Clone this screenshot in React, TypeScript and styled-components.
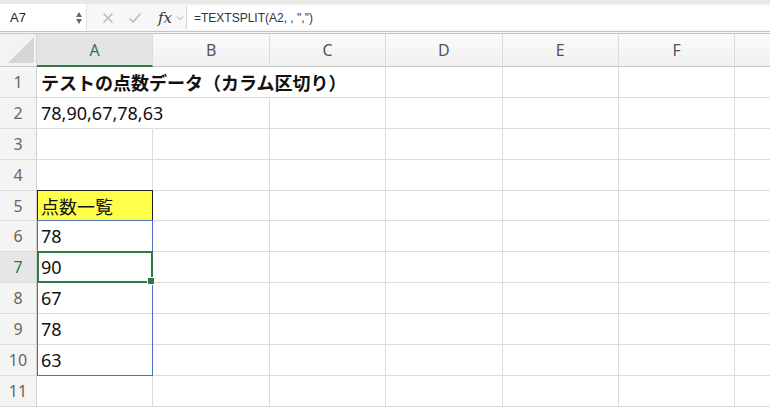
import React from "react";
import styled, { createGlobalStyle } from "styled-components";

const GlobalStyle = createGlobalStyle`
  html, body { margin: 0; padding: 0; background: #ffffff; }
  body {
    font-family: "Noto Sans", "Noto Sans CJK JP", sans-serif;
    overflow: hidden;
  }
`;

// G sits past the right edge of the window, only its left part shows
const COLS = ["A", "B", "C", "D", "E", "F", "G"];
const VISIBLE_LABELS = ["A", "B", "C", "D", "E", "F"];
const ROW_COUNT = 11;

type CellData = { text?: string; bold?: boolean; yellow?: boolean; spill?: boolean };

const data: Record<string, CellData> = {
  A1: { text: "テストの点数データ（カラム区切り）", bold: true, spill: true },
  B1: { spill: true },
  A2: { text: "78,90,67,78,63", spill: true },
  A5: { text: "点数一覧", yellow: true },
  A6: { text: "78" },
  A7: { text: "90" },
  A8: { text: "67" },
  A9: { text: "78" },
  A10: { text: "63" },
};

const Page = styled.div`
  width: 770px;
  height: 407px;
  overflow: hidden;
  display: flex;
  flex-direction: column;
`;

const Toolbar = styled.div`
  height: 27px;
  display: flex;
  align-items: stretch;
  background: #f7f7f7;
  border-top: 4px solid #e9e9e9;
  border-bottom: 3px double #c4c4c4;
`;

const NameBox = styled.div`
  width: 87px;
  display: flex;
  align-items: center;
  justify-content: space-between;
  padding: 0 4px 0 10px;
  box-sizing: border-box;
  background: #ffffff;
  border-right: 1px solid #e2e2e2;
  font-family: "Liberation Sans", Arial, sans-serif;
  font-size: 13px;
  color: #222;
`;

const Spinner = styled.div`
  display: flex;
  flex-direction: column;
  gap: 2px;
`;

const Arrow = styled.div<{ $up?: boolean }>`
  width: 0;
  height: 0;
  border-left: 3.5px solid transparent;
  border-right: 3.5px solid transparent;
  ${(p) =>
    p.$up
      ? "border-bottom: 5px solid #6a6a6a;"
      : "border-top: 5px solid #6a6a6a;"}
`;

const Actions = styled.div`
  width: 99px;
  display: flex;
  align-items: center;
  padding-left: 15px;
  box-sizing: border-box;
  gap: 14px;
`;

const FxLabel = styled.span`
  font-family: "DejaVu Serif", "Liberation Serif", serif;
  font-style: italic;
  font-size: 15px;
  color: #333;
  margin-left: 2px;
`;

const FormulaBox = styled.div`
  flex: 1;
  display: flex;
  align-items: center;
  background: #ffffff;
  border-left: 1px solid #d6d6d6;
  margin: 2px 0;
  padding-left: 7px;
  font-family: "Liberation Sans", Arial, sans-serif;
  font-size: 12px;
  color: #333;
`;

const Sheet = styled.div`
  display: grid;
  grid-template-columns: 37px repeat(7, 116.4px);
  grid-template-rows: 33px repeat(${ROW_COUNT}, 30.9px);
`;

const Corner = styled.div`
  grid-column: 1;
  grid-row: 1;
  background: #f3f3f3;
  border-right: 1px solid #d4d4d4;
  border-bottom: 1px solid #c8c8c8;
  display: flex;
  align-items: flex-end;
  justify-content: flex-end;
  padding: 0 2px 3px 0;
`;

const ColHeader = styled.div<{ $col: number; $active?: boolean }>`
  grid-row: 1;
  grid-column: ${(p) => p.$col};
  background: ${(p) => (p.$active ? "#e4e4e4" : "linear-gradient(#fbfbfb, #f1f1f1)")};
  border-right: 1px solid #dcdcdc;
  border-bottom: ${(p) => (p.$active ? "2px solid #2c7a46" : "1px solid #c8c8c8")};
  display: flex;
  align-items: center;
  justify-content: center;
  font-size: 16px;
  color: ${(p) => (p.$active ? "#2c7a46" : "#555")};
`;

const RowHeader = styled.div<{ $row: number; $active?: boolean }>`
  grid-column: 1;
  grid-row: ${(p) => p.$row};
  background: ${(p) => (p.$active ? "#e6e6e6" : "#f4f4f4")};
  border-right: 1px solid #d0d0d0;
  border-bottom: 1px solid #dcdcdc;
  display: flex;
  align-items: center;
  justify-content: center;
  font-size: 16px;
  color: ${(p) => (p.$active ? "#2c7a46" : "#666")};
`;

const Cell = styled.div<{
  $row: number;
  $col: number;
  $bold?: boolean;
  $yellow?: boolean;
  $spill?: boolean;
}>`
  grid-row: ${(p) => p.$row};
  grid-column: ${(p) => p.$col};
  border-right: 1px solid ${(p) => (p.$spill ? "transparent" : "#dcdcdc")};
  border-bottom: 1px solid #dcdcdc;
  background: ${(p) => (p.$yellow ? "#ffff4a" : "transparent")};
  display: flex;
  align-items: center;
  padding-left: 4px;
  white-space: nowrap;
  overflow: visible;
  font-family: "Noto Sans", "Noto Sans CJK JP", sans-serif;
  font-size: 18px;
  font-weight: ${(p) => (p.$bold ? 700 : 400)};
  color: #111;
  min-width: 0;
`;

const RangeBox = styled.div<{ $from: number; $to: number; $color: string; $width: number }>`
  grid-column: 2;
  grid-row: ${(p) => `${p.$from} / ${p.$to}`};
  pointer-events: none;
  border: ${(p) => `${p.$width}px solid ${p.$color}`};
  margin: -1px 0 0 0;
  position: relative;
  z-index: 2;
`;

const FillHandle = styled.div`
  position: absolute;
  right: -4px;
  bottom: -4px;
  width: 6px;
  height: 6px;
  background: #2c7a46;
  border: 1px solid #ffffff;
`;

const CrossIcon = () => (
  <svg width="12" height="12" viewBox="0 0 12 12">
    <path d="M1.5 1.5 L10.5 10.5 M10.5 1.5 L1.5 10.5" stroke="#bdbdbd" strokeWidth="1.6" />
  </svg>
);

const CheckIcon = () => (
  <svg width="14" height="12" viewBox="0 0 14 12">
    <path d="M1.5 6.5 L5 10 L12.5 1.5" stroke="#bdbdbd" strokeWidth="1.6" fill="none" />
  </svg>
);

const ChevronIcon = () => (
  <svg width="8" height="6" viewBox="0 0 8 6" style={{ marginLeft: -10 }}>
    <path d="M1 1.5 L4 4.5 L7 1.5" stroke="#aaaaaa" strokeWidth="1" fill="none" />
  </svg>
);

const CornerTriangle = () => (
  <svg width="26" height="26" viewBox="0 0 26 26">
    <path d="M26 0 L26 26 L0 26 Z" fill="#d6d6d6" />
  </svg>
);

export default function App() {
  const rows = Array.from({ length: ROW_COUNT }, (_, i) => i + 1);
  return (
    <Page>
      <GlobalStyle />
      <Toolbar>
        <NameBox>
          A7
          <Spinner>
            <Arrow $up />
            <Arrow />
          </Spinner>
        </NameBox>
        <Actions>
          <CrossIcon />
          <CheckIcon />
          <FxLabel>fx</FxLabel>
          <ChevronIcon />
        </Actions>
        <FormulaBox>=TEXTSPLIT(A2, , ",")</FormulaBox>
      </Toolbar>
      <Sheet>
        <Corner>
          <CornerTriangle />
        </Corner>
        {COLS.map((c, ci) => (
          <ColHeader key={c} $col={ci + 2} $active={c === "A"}>
            {VISIBLE_LABELS.includes(c) ? c : null}
          </ColHeader>
        ))}
        {rows.map((r) => (
          <React.Fragment key={r}>
            <RowHeader $row={r + 1} $active={r === 7}>
              {r}
            </RowHeader>
            {COLS.map((c, ci) => {
              const d = data[`${c}${r}`];
              return (
                <Cell
                  key={c}
                  $row={r + 1}
                  $col={ci + 2}
                  $bold={d?.bold}
                  $yellow={d?.yellow}
                  $spill={d?.spill}
                >
                  {d?.text}
                </Cell>
              );
            })}
          </React.Fragment>
        ))}
        <RangeBox $from={6} $to={7} $color="#222222" $width={1} />
        <RangeBox $from={7} $to={12} $color="#4a6fc9" $width={1} />
        <RangeBox $from={8} $to={9} $color="#2c7a46" $width={2}>
          <FillHandle />
        </RangeBox>
      </Sheet>
    </Page>
  );
}
